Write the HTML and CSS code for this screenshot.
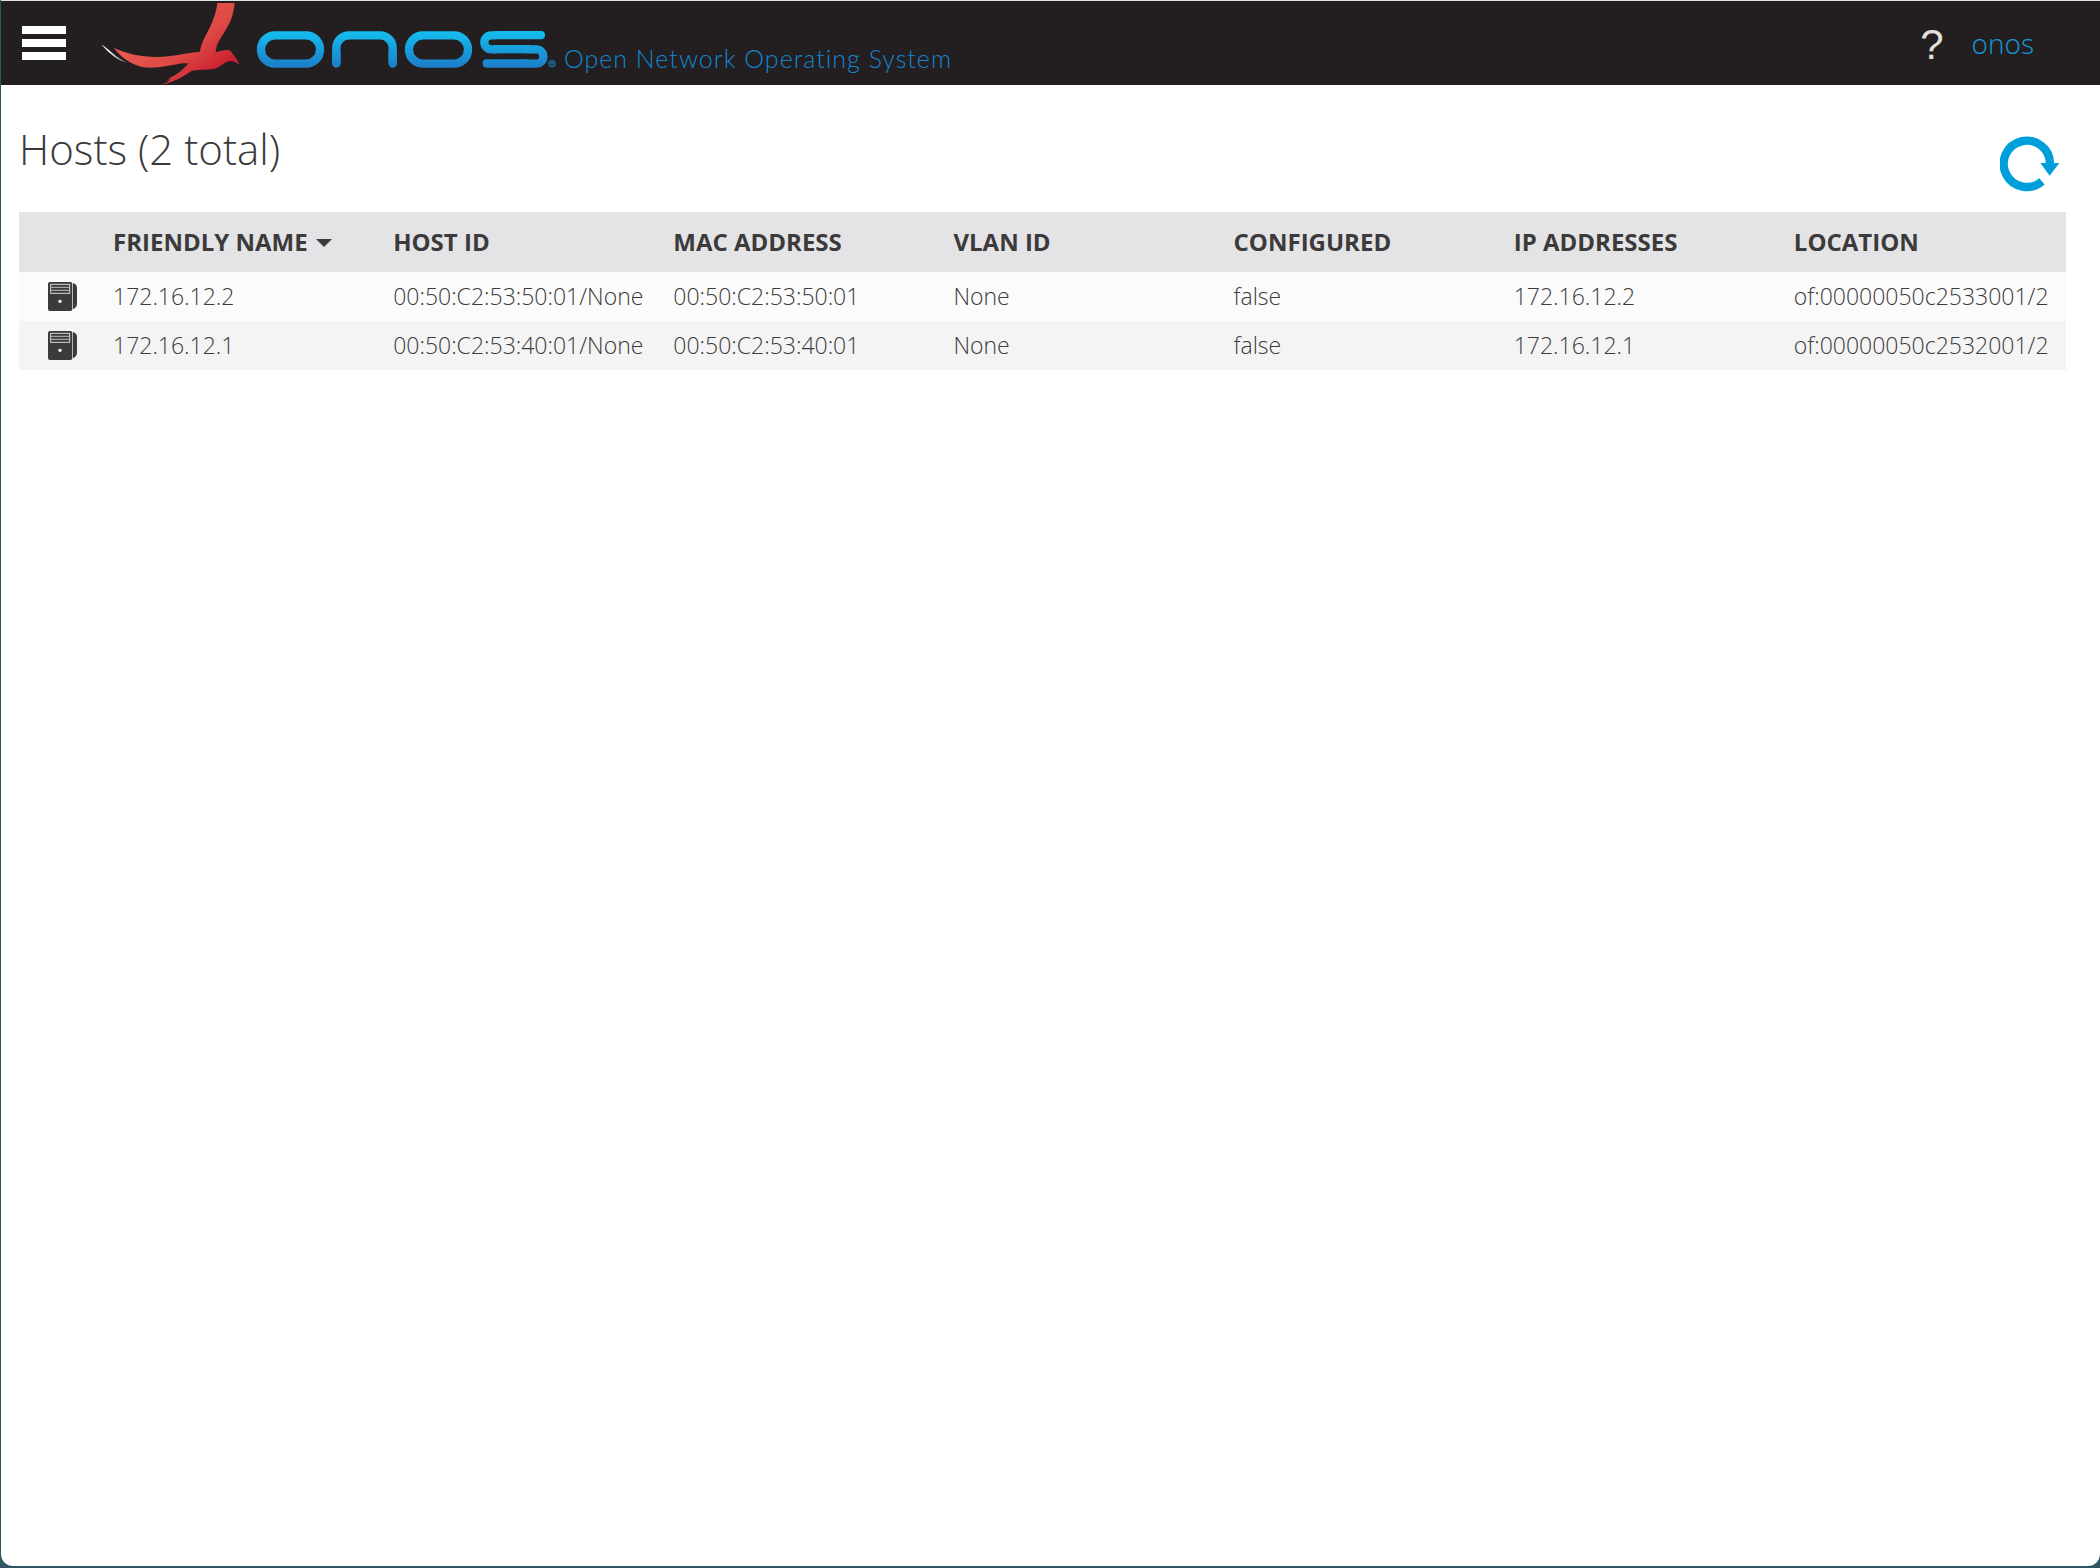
FILE: index.html
```
<!DOCTYPE html>
<html lang="en">
  <head>
    <meta charset="UTF-8" />
    <meta name="viewport" content="width=device-width, initial-scale=1.0" />
    <title>ONOS - Hosts</title>
    <link rel="stylesheet" href="styles.css" />
  </head>
  <body>
    <div class="window">
      <header class="masthead">
        <button class="nav-toggle" type="button" aria-label="Menu">
          <span class="bar"></span>
          <span class="bar"></span>
          <span class="bar"></span>
        </button>
        <div class="brand">
          <svg class="logo" viewBox="300 3 1368 252" role="img" aria-label="ONOS">
            <defs>
              <linearGradient id="bird" gradientUnits="userSpaceOnUse" x1="520" y1="60" x2="640" y2="220">
                <stop offset="0" stop-color="#e8584f" />
                <stop offset="0.5" stop-color="#dd4844" />
                <stop offset="1" stop-color="#cc2030" />
              </linearGradient>
              <linearGradient id="streak" x1="0" y1="0" x2="1" y2="0">
                <stop offset="0" stop-color="#ffffff" />
                <stop offset="0.4" stop-color="#e6e6e6" />
                <stop offset="1" stop-color="#4a4647" />
              </linearGradient>
              <linearGradient id="word" gradientUnits="userSpaceOnUse" x1="0" y1="93" x2="0" y2="204">
                <stop offset="0" stop-color="#14bff0" />
                <stop offset="1" stop-color="#1c7cc8" />
              </linearGradient>
            </defs>
            <path fill="url(#streak)" d="M304 133C326 146 350 177 386 189C354 185 326 159 304 133Z" />
            <path
              fill="url(#bird)"
              d="M652 9L704 9C701 45 690 70 674 95C655 124 647 140 647 157C663 152 678 148 688 151C698 158 700 166 707 173C713 180 716 188 717 193C708 187 700 183 690 183C672 185 665 200 648 205C625 212 600 207 575 213C555 225 530 245 485 254C500 248 505 245 510 241L497 242L515 236L504 236C530 227 550 208 566 190L546 190C510 196 470 207 430 202C390 193 362 170 341 143C375 160 420 170 470 171C520 170 560 158 600 155C603 125 625 95 637 65C647 40 650 25 652 9Z"
            />
            <!-- wordmark -->
            <g fill="none" stroke="url(#word)" stroke-width="25" stroke-linecap="round">
              <rect x="783" y="106" width="177" height="85" rx="42" />
              <svg x="980" y="80" width="230" height="112" viewBox="980 80 230 112">
                <rect x="1009" y="106" width="169" height="160" rx="38" />
              </svg>
              <line x1="1009" y1="160" x2="1009.1" y2="191" />
              <line x1="1178" y1="160" x2="1178.1" y2="191" />
              <rect x="1227" y="106" width="177" height="85" rx="42" />
              <svg x="1430" y="80" width="60" height="140" viewBox="1430 80 60 140">
                <rect x="1453" y="106" width="120" height="42" rx="21" />
              </svg>
              <svg x="1580" y="80" width="80" height="140" viewBox="1580 80 80 140">
                <rect x="1500" y="148" width="130" height="43" rx="21" />
              </svg>
            </g>
            <g fill="url(#word)">
              <rect x="1480" y="93" width="155" height="25" rx="12" />
              <rect x="1480" y="135" width="110" height="25" />
              <rect x="1448" y="178" width="145" height="25" rx="12" />
            </g>
            <g stroke="#1c6ea6" fill="none">
              <circle cx="1656" cy="191" r="9" stroke-width="4" />
              <circle cx="1656" cy="190" r="3" stroke-width="4" />
            </g>
          </svg>
          <span class="tagline">Open Network Operating System</span>
        </div>
        <a class="help" href="#help" aria-label="Help">?</a>
        <a class="user" href="#user">onos</a>
      </header>

      <main class="content">
        <div class="title-row">
          <h1>Hosts (2 total)</h1>
          <button class="refresh" type="button" aria-label="Refresh">
            <svg viewBox="360 408 180 168">
              <path d="M510 491A69.500 69.500 0 1 0 486 544" fill="none" stroke="#009fdb" stroke-width="25" />
              <path d="M481 489H538L509 527Z" fill="#009fdb" />
            </svg>
          </button>
        </div>

        <svg class="defs" aria-hidden="true">
          <symbol id="host" viewBox="144 516 87 87">
            <rect x="144" y="516" width="73" height="87" rx="6" fill="#3c3a3a" />
            <path d="M219 519C226 521 231 526 231 533V582C231 589 226 594 219 598Z" fill="#3c3a3a" />
            <rect x="152" y="523" width="57" height="27" fill="none" stroke="#d8d8d8" stroke-width="3" />
            <path d="M153 532H208M153 541H208" stroke="#a5a4a4" stroke-width="4" />
            <circle cx="180" cy="574" r="5" fill="#fff" />
          </symbol>
        </svg>

        <table class="hosts">
          <thead>
            <tr>
              <th class="icon-col" aria-label="Type"></th>
              <th aria-sort="descending">
                <button class="sort" type="button">FRIENDLY NAME<span class="arrow"></span></button>
              </th>
              <th>HOST ID</th>
              <th>MAC ADDRESS</th>
              <th>VLAN ID</th>
              <th>CONFIGURED</th>
              <th>IP ADDRESSES</th>
              <th>LOCATION</th>
            </tr>
          </thead>
          <tbody>
            <tr>
              <td class="icon-col"><svg class="host-icon"><use href="#host" /></svg></td>
              <td>172.16.12.2</td>
              <td>00:50:C2:53:50:01/None</td>
              <td>00:50:C2:53:50:01</td>
              <td>None</td>
              <td>false</td>
              <td>172.16.12.2</td>
              <td>of:00000050c2533001/2</td>
            </tr>
            <tr>
              <td class="icon-col"><svg class="host-icon"><use href="#host" /></svg></td>
              <td>172.16.12.1</td>
              <td>00:50:C2:53:40:01/None</td>
              <td>00:50:C2:53:40:01</td>
              <td>None</td>
              <td>false</td>
              <td>172.16.12.1</td>
              <td>of:00000050c2532001/2</td>
            </tr>
          </tbody>
        </table>
      </main>
    </div>
  </body>
</html>
```
FILE: styles.css
```
* {
  padding: 0;
  margin: 0;
  box-sizing: border-box;
}
body {
  display: flex;
  min-height: 100vh;
  padding: 0 0 2px 1px;
  background-color: #2f5563;
  font-family: "Open Sans", Arial, sans-serif;
  font-weight: 300;
  color: #3c3a3a;
}
button {
  border: none;
  background: none;
  font: inherit;
  color: inherit;
  cursor: pointer;
}
a {
  text-decoration: none;
}
.window {
  flex: 1;
  background-color: white;
  border-top: 1px solid #dde5e4;
  border-radius: 0 0 12px 12px;
}

/* masthead */
.masthead {
  display: flex;
  align-items: center;
  height: 84px;
  padding: 0 66px 0 21px;
  background-color: #231f20;
}
.nav-toggle {
  display: flex;
  flex-direction: column;
  gap: 5px;
  width: 44px;
}
.bar {
  height: 8px;
  background-color: white;
}
.brand {
  display: flex;
  align-items: center;
  margin-left: 34px;
}
.logo {
  width: 456px;
  height: 84px;
}
.tagline {
  margin-left: 8px;
  padding-top: 30px;
  font-family: Lato, sans-serif;
  font-size: 25px;
  font-weight: 300;
  line-height: 32px;
  letter-spacing: 1px;
  color: #1386d0;
}
.help {
  margin-left: auto;
  padding-top: 4px;
  font-family: "Liberation Sans", Arial, sans-serif;
  font-size: 42px;
  font-weight: 400;
  color: #e3e0d8;
}
.user {
  margin-left: 28px;
  font-size: 28px;
  color: #1499d6;
}

/* page content */
.content {
  padding: 32px 34px 0 18px;
}
.title-row {
  display: flex;
  justify-content: space-between;
  height: 95px;
  padding-right: 6px;
}
h1 {
  font-size: 42px;
  font-weight: 300;
  line-height: 64px;
}
.refresh {
  width: 60px;
  height: 56px;
  margin-top: 19px;
}
.refresh svg {
  display: block;
  width: 60px;
  height: 56px;
}
.defs {
  position: absolute;
  width: 0;
  height: 0;
}

.hosts {
  width: 100%;
  table-layout: fixed;
  border-collapse: collapse;
  font-size: 23px;
  text-align: left;
  white-space: nowrap;
}
.hosts th,
.hosts td {
  padding: 0 8px 1px;
}
.hosts th {
  height: 60px;
  background-color: #e4e4e6;
  font-size: 24px;
  font-weight: 700;
}
.hosts td {
  height: 49px;
}
.hosts tbody tr:nth-child(odd) {
  background-color: #fbfbfb;
}
.hosts tbody tr:nth-child(even) {
  background-color: #f4f4f4;
}
.hosts .icon-col {
  width: 86px;
}
.host-icon {
  display: block;
  width: 29px;
  height: 29px;
  margin: 0 auto;
}
.sort {
  display: flex;
  align-items: center;
  gap: 8px;
}
.arrow {
  margin-top: 3px;
  border-left: 8px solid transparent;
  border-right: 8px solid transparent;
  border-top: 8px solid #3c3a3a;
}
```
